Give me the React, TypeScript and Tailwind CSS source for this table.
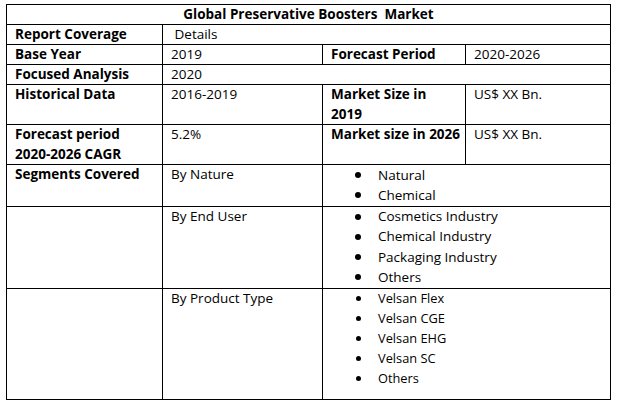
import React from "react";

const font = { fontFamily: "'Open Sans', Lato, 'Liberation Sans', sans-serif" };

function Bullets({ items, small }: { items: string[]; small?: boolean }) {
  return (
    <ul className="m-0 p-0 list-none">
      {items.map((t) => (
        <li
          key={t}
          className={small ? "flex items-center h-[20px] pl-[33px] text-[12.8px]" : "flex items-center h-[20.25px] pl-[32px]"}
        >
          <span
            className={
              small
                ? "block w-[5px] h-[5px] rounded-full bg-black mr-[17px] shrink-0"
                : "block w-[6px] h-[6px] rounded-full bg-black mr-[17px] shrink-0"
            }
          />
          <span>{t}</span>
        </li>
      ))}
    </ul>
  );
}

export default function App() {
  const td = "border border-black align-top px-[8px] py-0";
  const two = "leading-[19.5px]";
  return (
    <div className="w-[617px] h-[406px] bg-white text-black pt-[4px] pl-[6px]" style={font}>
      <table className="border-collapse table-fixed w-[604px] text-[13.5px] leading-[19px]">
        <colgroup>
          <col className="w-[156px]" />
          <col className="w-[160px]" />
          <col className="w-[143px]" />
          <col className="w-[145px]" />
        </colgroup>
        <tbody>
          <tr>
            <td colSpan={4} className={`${td} text-center font-bold`}>
              Global Preservative Boosters&nbsp; Market
            </td>
          </tr>
          <tr>
            <td className={`${td} font-bold whitespace-nowrap`}>Report Coverage</td>
            <td colSpan={3} className={td}>&nbsp;Details</td>
          </tr>
          <tr>
            <td className={`${td} font-bold`}>Base Year</td>
            <td className={td}>2019</td>
            <td className={`${td} font-bold whitespace-nowrap`}>Forecast Period</td>
            <td className={td}>2020-2026</td>
          </tr>
          <tr>
            <td className={`${td} font-bold whitespace-nowrap`}>Focused Analysis</td>
            <td colSpan={3} className={td}>2020</td>
          </tr>
          <tr>
            <td className={`${td} font-bold`}>Historical Data</td>
            <td className={td}>2016-2019</td>
            <td className={`${td} ${two} font-bold`}>
              Market Size in
              <br />
              2019
            </td>
            <td className={td}>US$ XX Bn.</td>
          </tr>
          <tr>
            <td className={`${td} ${two} font-bold`}>
              Forecast period
              <br />
              2020-2026 CAGR
            </td>
            <td className={td}>5.2%</td>
            <td className={`${td} font-bold whitespace-nowrap !pr-0`}>Market size in 2026</td>
            <td className={td}>US$ XX Bn.</td>
          </tr>
          <tr>
            <td className={`${td} font-bold whitespace-nowrap`}>Segments Covered</td>
            <td className={td}>By Nature</td>
            <td colSpan={2} className={`${td} !px-0`}>
              <Bullets items={["Natural", "Chemical"]} />
            </td>
          </tr>
          <tr>
            <td className={td}></td>
            <td className={td}>By End User</td>
            <td colSpan={2} className={`${td} !px-0`}>
              <Bullets items={["Cosmetics Industry", "Chemical Industry", "Packaging Industry", "Others"]} />
            </td>
          </tr>
          <tr>
            <td className={td}></td>
            <td className={td}>By Product Type</td>
            <td colSpan={2} className={`${td} !px-0 pb-[10px]`}>
              <Bullets small items={["Velsan Flex", "Velsan CGE", "Velsan EHG", "Velsan SC", "Others"]} />
            </td>
          </tr>
        </tbody>
      </table>
    </div>
  );
}
